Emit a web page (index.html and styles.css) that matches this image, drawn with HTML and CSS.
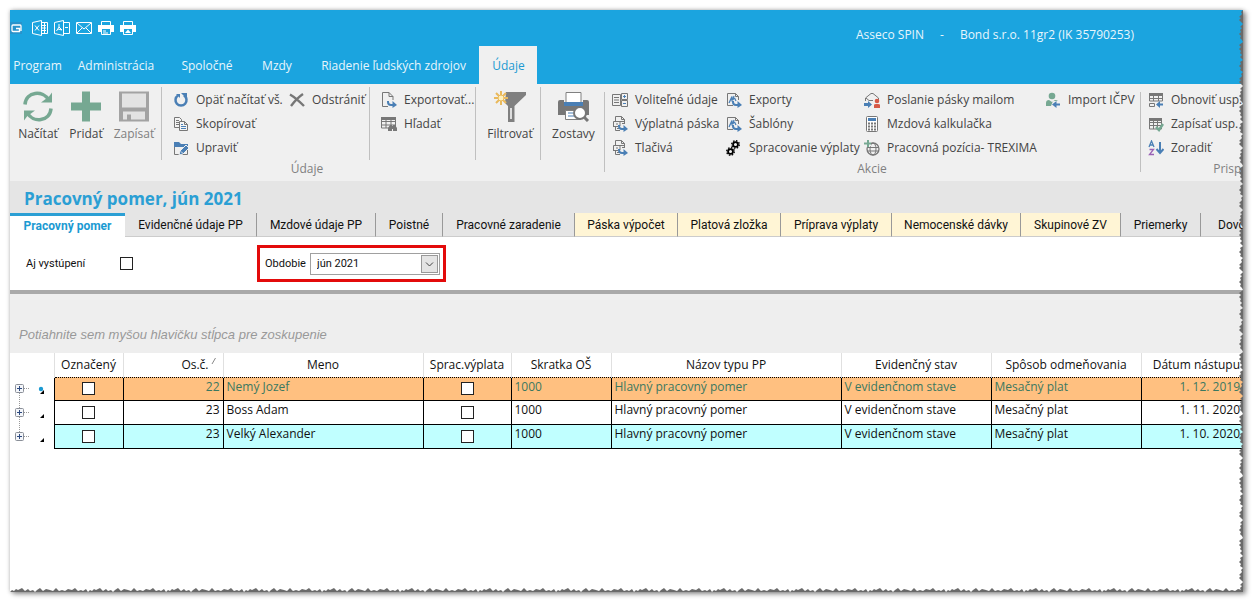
FILE: index.html
```html
<!DOCTYPE html>
<html lang="sk">
<head>
<meta charset="utf-8">
<title>Asseco SPIN</title>
<link rel="stylesheet" href="styles.css">
</head>
<body>
<svg class="defs" aria-hidden="true">
  <symbol id="export-arrow" viewBox="0 0 16 16"><path d="M7 9v1q0 3 3 3h3" fill="none" stroke="#4a7fb5" stroke-width="2"/><path d="M11.500 9l4.500 4-4.500 3z" fill="#4a7fb5"/></symbol>
  <symbol id="form" viewBox="0 0 16 16"><path d="M3.500 5V.5h6l3 3V8M9.500.5v3h3M3.500 11v3.500H8M1.500 11V5.500h11V8M1.500 10.500H6" fill="none" stroke="#777"/><path d="M4 8h2M8 6v4M10 7.500h2M5 12.500h3" stroke="#777"/><use href="#export-arrow"/></symbol>
  <symbol id="template" viewBox="0 0 16 16"><path d="M1.500 1.500h8l3 3V8M1.500 1.500v12H7M9.500 1.500v3h3" fill="none" stroke="#777"/><path d="M3 11L6 4.500v5M8 4l-1 4M8.500 6l1.500 3" fill="none" stroke="#4a7fb5" stroke-width="1.300"/><use href="#export-arrow"/></symbol>
  <symbol id="gear" viewBox="0 0 10 10"><circle cx="5" cy="5" r="2.700" fill="none" stroke="#000" stroke-width="2"/><circle cx="5" cy="5" r="4.200" fill="none" stroke="#000" stroke-width="1.500" stroke-dasharray="1.700 1.600"/></symbol>
  <symbol id="plus" viewBox="0 0 14 10"><rect x=".5" y=".5" width="8" height="8" rx="1" fill="#f4f6fa" stroke="#8a8f98"/><path d="M2 4.500h5M4.500 2v5" stroke="#2d4a80"/><path d="M9 4.500h5" stroke="#999" stroke-dasharray="1 1"/></symbol>
</svg>

<main class="window">
  <header class="titlebar">
    <div class="quick">
      <button aria-label="Aplikácia" class="app"><svg viewBox="0 0 12 16"><rect width="12" height="12" y="2" fill="#2893cb"/><path d="M6 8.500h3.500v3H3q-1 0-1-1V6q0-1 1-1h7q1 0 1 1v5" fill="none" stroke="#fff" stroke-width="1.300"/></svg></button>
      <button aria-label="Excel"><svg viewBox="0 0 16 16" fill="none" stroke="#fff"><path d="M.5 2.500L9.500.5v15l-9-2zM10 2.500h5.500v11H10M10 5.500h4M10 8h4M10 10.500h4M12.500 3v10M3 5.500l4 5M7 5.500l-4 5"/></svg></button>
      <button aria-label="PDF"><svg viewBox="0 0 16 16" fill="none" stroke="#fff"><path d="M.5 2.500L9.500.5v15l-9-2zM10 2.500h5.500v11H10M5 4v3l-2.500 4M5 7l3 3-4-1M11 7.500h3"/></svg></button>
      <button aria-label="E-mail"><svg viewBox="0 0 16 16" fill="none" stroke="#fff"><path d="M.5 2.500h15v11H.5zM1 3l7 6 7-6M1 13l5-5M15 13l-5-5"/></svg></button>
      <button aria-label="Tlač"><svg viewBox="0 0 16 16"><path d="M3.500 5V1.500h9V5" fill="none" stroke="#fff"/><path d="M0 5h16v7h-3V9H3v3H0z" fill="#fff"/><path d="M3.500 9v5.500h9V9M5 11h3M5 13h5" fill="none" stroke="#fff"/></svg></button>
      <button aria-label="Náhľad tlače"><svg viewBox="0 0 16 16"><path d="M3.500 5V1.500h9V5" fill="none" stroke="#fff"/><path d="M0 5h16v7h-3V9H3v3H0zM5 13h6L8 9.500z" fill="#fff"/><path d="M3.500 9v5.500h9V9" fill="none" stroke="#fff"/></svg></button>
    </div>
    <div class="caption"><span>Asseco SPIN</span><span>-</span><span>Bond s.r.o. 11gr2 (IK 35790253)</span></div>
  </header>
  <nav class="menu">
    <button>Program</button><button>Administrácia</button><button>Spoločné</button><button>Mzdy</button><button>Riadenie ľudských zdrojov</button><button class="active">Údaje</button>
  </nav>

  <section class="ribbon">
    <div class="group group-data">
      <div class="panels">
        <div class="panel bigs">
          <button class="big"><svg viewBox="0 0 30 30" fill="none" stroke="#76a892" stroke-width="3.500"><path d="M2 13C3 0 20-2 26 9M28 17C27 30 10 32 4 21"/><path d="M29 1v10H18l4-3 4-3zM1 29V19h11l-4 3-4 3z" fill="#76a892" stroke="none"/></svg><span>Načítať</span></button>
          <button class="big"><svg viewBox="0 0 30 30"><path d="M11 0h8v11h11v8H19v11h-8V19H0v-8h11z" fill="#76a892"/></svg><span>Pridať</span></button>
          <button class="big" disabled><svg viewBox="0 0 30 30"><path d="M0 0h30v30H0z" fill="#a3a3a3"/><path d="M3 2h24v14H3zM4 20h22v8H12v-5H8v5H4z" fill="#e3e3e3"/></svg><span>Zapísať</span></button>
        </div>
        <div class="panel tools tools-edit">
          <button><svg viewBox="0 0 16 16"><path d="M5 3.500a5.500 5.500 0 1 0 6 0" fill="none" stroke="#4a7fb5" stroke-width="2.500"/><path d="M8 1h6v6zM3 2h4v4z" fill="#4a7fb5"/></svg>Opäť načítať vš.</button>
          <button><svg viewBox="0 0 16 16" fill="none" stroke="#777" stroke-width="2.400"><path d="M1 2.500Q7 6 15 14M14 2Q8 6 2 14"/></svg>Odstrániť</button>
          <button><svg viewBox="0 0 16 16" fill="#f4f4f4" stroke="#777"><path d="M1.500 1.500h5l2 2v8h-7zM3 4.500h3M3 6.500h4M3 8.500h4"/><path d="M6.500 5.500h5l3 3v6h-8zM11.500 5.500v3h3"/><path d="M8 8.500h2M8 10.500h5M8 12.500h5" stroke="#4a7fb5"/></svg>Skopírovať</button>
          <span></span>
          <button><svg viewBox="0 0 16 16"><path d="M1.500 4v10.500h13V6" fill="none" stroke="#777"/><path d="M1 2h5l2 2h7v3H1z" fill="#4a7fb5"/><path d="M6 15l1-4 6-6 3 3-6 6z" fill="#4a7fb5" stroke="#f0f0f0"/><path d="M8 11.500l2 2" stroke="#eee"/></svg>Upraviť</button>
        </div>
        <div class="panel tools tools-export">
          <button><svg viewBox="0 0 16 16"><path d="M7 14.500H1.500V.5H8l4 4V8M8 .5v4h4" fill="none" stroke="#777"/><use href="#export-arrow"/></svg>Exportovať...</button>
          <button><svg viewBox="0 0 16 16"><path d="M.5 2h14v10H.5zM1 5.500h13M1 9h13M5 3v9M10 3v6" fill="none" stroke="#777"/><path d="M0 1h15v3H0zM7 12l2-3h2v1h1V9h2l2 3v3h-4v-2h-1v2H7z" fill="#777"/></svg>Hľadať</button>
        </div>
        <div class="panel single filter">
          <button class="big"><svg viewBox="0 0 32 31"><path d="M12 1h20v3L20.500 15v16H14V15l-3-3z" fill="#808080"/><path d="M17 17v11" stroke="#ddd" stroke-width="2"/><path d="M7 0v14M0 7h14M2 2l10 10M12 2L2 12" stroke="#e9b95c" stroke-width="2"/><circle cx="7" cy="7" r="3" fill="#fff0bc" stroke="#e9b95c"/></svg><span>Filtrovať</span></button>
        </div>
        <div class="panel single">
          <button class="big"><svg viewBox="0 0 32 31"><path d="M8 11V1.500h15V11" fill="#fff" stroke="#808080"/><path d="M0 11q0-2 2-2h4v6h19V9h4q2 0 2 2v13H0z" fill="#777"/><path d="M6 11h19v4H6z" fill="#4a7fb5"/><path d="M7.500 19.500h15v9h-15z" fill="#fff" stroke="#808080"/><path d="M10 22h5M10 25h6" stroke="#4a7fb5"/><circle cx="22" cy="22" r="6" fill="#fff" stroke="#777" stroke-width="2"/><path d="M26 26l4 4" stroke="#777" stroke-width="3"/></svg><span>Zostavy</span></button>
        </div>
      </div>
      <h2>Údaje</h2>
    </div>
    <div class="group group-actions">
      <div class="tools tools-actions">
        <button><svg viewBox="0 0 16 16" fill="none" stroke="#777"><path d="M.5 2.500h8v11h-8zM2 5.500h5M2 8h5M2 10.500h5M9.500 1.500h6v6h-6zM9.500 8.500h6v6h-6z"/><path d="M11 4.500h3M12.500 3v3M11 11.500h3" stroke="#4a7fb5"/></svg>Voliteľné údaje</button>
        <button><svg viewBox="0 0 16 16"><use href="#template"/></svg>Exporty</button>
        <button><svg viewBox="0 0 16 16"><path d="M1.500 9V6L7 1.500h2L14.500 6v2M2 6l3 2.500h4" fill="none" stroke="#777"/><path d="M0 11h4V9l4 3.500L4 16v-2H0zM5 11h2" fill="#4a7fb5"/><path d="M10 16v-3q0-1 2-1h2q2 0 2 1v3z" fill="#d65a48"/><circle cx="13" cy="9" r="2.300" fill="#d65a48"/></svg>Poslanie pásky mailom</button>
        <button><svg viewBox="0 0 16 16"><circle cx="7" cy="4" r="3.300" fill="#76a892"/><path d="M1 14v-3q0-3 3-3l3 2 3-2q2 0 3 1H8l-2 5z" fill="#76a892"/><path d="M15 12.500H9" stroke="#4a7fb5" stroke-width="2"/><path d="M11.500 9v7L7 12.500z" fill="#4a7fb5"/></svg>Import IČPV</button>
        <button><svg viewBox="0 0 16 16"><use href="#form"/></svg>Výplatná páska</button>
        <button><svg viewBox="0 0 16 16"><use href="#template"/></svg>Šablóny</button>
        <button><svg viewBox="0 0 16 16"><rect x="2.500" y=".5" width="11" height="15" rx="1" fill="#fff" stroke="#777"/><path d="M4 2h8v3H4z" fill="#4a7fb5"/><path d="M4 7.500h8M4 10.500h8M4 13.500h8" stroke="#777" stroke-width="2" stroke-dasharray="2 1"/></svg>Mzdová kalkulačka</button>
        <span></span>
        <button><svg viewBox="0 0 16 16"><use href="#form"/></svg>Tlačivá</button>
        <button><svg viewBox="0 0 16 16"><use href="#gear" x="5" width="9" height="9"/><use href="#gear" y="7" width="9" height="9"/></svg>Spracovanie výplaty</button>
        <button><svg viewBox="0 0 16 16"><circle cx="9" cy="9" r="6" fill="none" stroke="#777" stroke-width="1.300"/><ellipse cx="9" cy="9" rx="3" ry="6" fill="none" stroke="#777"/><path d="M3 7.500h12M3 11h12" stroke="#777"/><path d="M4 1v6M1 4h6" stroke="#f0f0f0" stroke-width="4"/><path d="M4 0v7M0 3.500h7" stroke="#76a892" stroke-width="2"/></svg>Pracovná pozícia- TREXIMA</button>
      </div>
      <h2>Akcie</h2>
    </div>
    <div class="group group-custom">
      <div class="tools">
        <button><svg viewBox="0 0 16 16"><path d="M1.500 2v7h13V2M1 6.500h13M5.500 3v6M10.500 3v6M1.500 11.500h5v3h-5z" fill="none" stroke="#777"/><path d="M1 1h14v3H1z" fill="#777"/><path d="M15 12.500h-4" stroke="#4a7fb5" stroke-width="2"/><path d="M12 9v7l-4-3.500z" fill="#4a7fb5"/></svg>Obnoviť usp.</button>
        <button><svg viewBox="0 0 16 16"><path d="M1.500 3v10h12V3M1 6.500h12M1 9.500h12M5.500 3v10M9.500 3v10" fill="none" stroke="#777"/><path d="M1 2h13v3H1z" fill="#777"/><path d="M8 11l3 3 4-6" fill="none" stroke="#76a892" stroke-width="2.500"/></svg>Zapísať usp.</button>
        <button><svg viewBox="0 0 16 16" fill="none"><path d="M1 7L3.500 1 6 7M2 5h3" stroke="#4a7fb5" stroke-width="1.300"/><path d="M1.500 9.500h4l-4 5h4.500" stroke="#9a62b5" stroke-width="1.300"/><path d="M12 2v10M8.500 9l3.500 4 3.500-4" stroke="#4a7fb5" stroke-width="2"/></svg>Zoradiť</button>
      </div>
      <h2>Prispôsobenie</h2>
    </div>
  </section>

  <h1>Pracovný pomer, jún 2021</h1>
  <div class="tabs" role="tablist">
    <button role="tab" class="current" aria-selected="true">Pracovný pomer</button>
    <button role="tab">Evidenčné údaje PP</button>
    <button role="tab">Mzdové údaje PP</button>
    <button role="tab">Poistné</button>
    <button role="tab">Pracovné zaradenie</button>
    <button role="tab" class="marked">Páska výpočet</button>
    <button role="tab" class="marked">Platová zložka</button>
    <button role="tab" class="marked">Príprava výplaty</button>
    <button role="tab" class="marked">Nemocenské dávky</button>
    <button role="tab" class="marked">Skupinové ZV</button>
    <button role="tab">Priemerky</button>
    <button role="tab">Dovolenky</button>
  </div>

  <form class="filters">
    <label for="left">Aj vystúpení</label>
    <input type="checkbox" id="left">
    <div class="period">
      <label for="period">Obdobie</label>
      <div class="combo">
        <select id="period"><option>jún 2021</option></select>
        <svg class="arrow" viewBox="0 0 17 18"><rect x=".5" y=".5" width="16" height="17" fill="#e4e4e4" stroke="#999"/><path d="M5 7.500l3.500 3.500L12 7.500" fill="none" stroke="#444"/></svg>
      </div>
    </div>
  </form>

  <p class="grouping">Potiahnite sem myšou hlavičku stĺpca pre zoskupenie</p>
  <table class="grid">
    <colgroup><col class="w-tree"><col class="w-mark"><col class="w-no"><col class="w-name"><col class="w-pay"><col class="w-no"><col class="w-type"><col class="w-state"><col class="w-state"><col></colgroup>
    <thead><tr><td></td><th>Označený</th><th class="num sorted">Os.č.<svg viewBox="0 0 6 8"><path d="M1 7l3.500-6" stroke="#888"/></svg></th><th>Meno</th><th>Sprac.výplata</th><th>Skratka OŠ</th><th>Názov typu PP</th><th>Evidenčný stav</th><th>Spôsob odmeňovania</th><th class="num">Dátum nástupu</th></tr></thead>
    <tbody>
      <tr class="selected"><td><svg class="tree" viewBox="0 0 44 23"><path d="M9.500 12v12" stroke="#999" stroke-dasharray="1 1"/><use href="#plus" x="5" y="7" width="14" height="10"/><circle cx="31" cy="12" r="2.200" fill="#1b9ad2"/><path d="M30 17h4v-4z"/></svg></td><td><input type="checkbox" aria-label="Označený 1"></td><td class="num">22</td><td>Nemý Jozef</td><td><input type="checkbox" aria-label="Sprac.výplata 1"></td><td>1000</td><td>Hlavný pracovný pomer</td><td>V evidenčnom stave</td><td>Mesačný plat</td><td class="num">1. 12. 2019</td></tr>
      <tr><td><svg class="tree" viewBox="0 0 44 23"><path d="M9.500 0v24" stroke="#999" stroke-dasharray="1 1"/><use href="#plus" x="5" y="7" width="14" height="10"/><path d="M30 17h4v-4z"/></svg></td><td><input type="checkbox" aria-label="Označený 2"></td><td class="num">23</td><td>Boss Adam</td><td><input type="checkbox" aria-label="Sprac.výplata 2"></td><td>1000</td><td>Hlavný pracovný pomer</td><td>V evidenčnom stave</td><td>Mesačný plat</td><td class="num">1. 11. 2020</td></tr>
      <tr class="alternate"><td><svg class="tree" viewBox="0 0 44 23"><path d="M9.500 0v10" stroke="#999" stroke-dasharray="1 1"/><use href="#plus" x="5" y="7" width="14" height="10"/><path d="M30 17h4v-4z"/></svg></td><td><input type="checkbox" aria-label="Označený 3"></td><td class="num">23</td><td>Velký Alexander</td><td><input type="checkbox" aria-label="Sprac.výplata 3"></td><td>1000</td><td>Hlavný pracovný pomer</td><td>V evidenčnom stave</td><td>Mesačný plat</td><td class="num">1. 10. 2020</td></tr>
    </tbody>
  </table>

  <svg class="tear tear-right" aria-hidden="true"><defs><pattern id="tear-v" width="5" height="62" patternUnits="userSpaceOnUse"><path d="M5 0L3 2 4 4 1 7 3 8 1 10 3 12 5 14 2 17 4 18 2 20 3 22 1 24 3 26 2 28 4 30 5 32 1 35 3 37 1 39 3 41 2 43 4 45 2 47 5 50 2 52 3 54 1 56 3 58 2 60 5 62z" fill="#6a6a6a"/></pattern></defs><rect width="100%" height="100%" fill="url(#tear-v)"/></svg>
  <svg class="tear tear-bottom" aria-hidden="true"><defs><pattern id="tear-h" width="78" height="5" patternUnits="userSpaceOnUse"><path d="M0 5L2 3 4 4 6 2 8 3 12 1 15 4 18 2 20 4 23 3 25 5 27 3 30 1 33 4 36 2 40 3 43 4 46 1 49 4 52 3 55 4 58 2 62 3 65 1 68 4 71 3 73 4 76 2 78 5z" fill="#6a6a6a"/></pattern></defs><rect width="100%" height="100%" fill="url(#tear-h)"/></svg>
</main>
</body>
</html>
```
FILE: styles.css
```css
* { box-sizing: border-box; }

body {
  margin: 0;
  min-height: 100vh;
  display: flex;
  padding: 10px 17px 18px 10px;
  background: #fff;
  color: #222;
  font: 12px/16px "Open Sans", "Noto Sans", sans-serif;
}

button {
  padding: 0;
  border: 0;
  background: none;
  color: inherit;
  font: inherit;
  white-space: nowrap;
}

h1, h2, p { margin: 0; }
.defs { position: absolute; width: 0; height: 0; }

.window {
  position: relative;
  flex: 1;
  min-width: 0;
  background: #fff;
  box-shadow: 0 0 4px rgba(0, 0, 0, .25), 3px 2px 5px rgba(0, 0, 0, .4);
}

/* title bar and menu */
.titlebar {
  display: flex;
  justify-content: space-between;
  height: 36px;
  padding-right: 109px;
  background: #1ba4df;
  color: #e8f6fc;
}
.quick { display: flex; align-items: center; gap: 6px; }
.quick svg { display: block; width: 16px; height: 16px; }
.quick .app { margin-right: 4px; }
.quick .app svg { width: 12px; }
.caption { display: flex; gap: 16px; padding-top: 17px; white-space: nowrap; }

.menu {
  display: grid;
  grid-template-columns: 54px 103px 79px 61px 172px 58px;
  height: 38px;
  background: #1ba4df;
  color: #e8f6fc;
}
.menu button { padding: 2px 0 0 1px; }
.menu .active { background: #f0f0f0; color: #1b9ad2; }

/* ribbon */
.ribbon {
  display: flex;
  height: 97px;
  overflow: hidden;
  background: #f0f0f0;
  color: #444;
}
.group {
  position: relative;
  display: flex;
  flex: none;
  flex-direction: column;
  justify-content: space-between;
  padding: 3px 0 4px;
}
.group h2 { color: #808080; font-size: 12px; font-weight: 400; text-align: center; }
.group + .group::before {
  content: "";
  position: absolute;
  left: 0;
  top: 8px;
  bottom: 9px;
  width: 1px;
  background: #c0c0c0;
}
.group-data { width: 594px; }
.group-actions { width: 536px; }
.group-custom { width: 226px; }
.panels { display: flex; }
.panel { flex: none; height: 73px; border-right: 1px solid #c0c0c0; }
.panel:last-child { border: 0; }
.bigs { display: flex; width: 152px; padding-left: 4px; }
.big {
  display: flex;
  flex-direction: column;
  align-items: center;
  gap: 4px;
  width: 48px;
  height: 56px;
  padding-top: 4px;
}
.big svg { flex: none; width: 30px; height: 31px; }
.big:disabled { color: #808080; }
.single { display: flex; justify-content: center; width: 65px; }
.filter { padding-left: 4px; }
.single .big svg { width: 32px; }

.tools {
  display: grid;
  grid-auto-rows: 24px;
  align-content: start;
  padding-left: 8px;
}
.tools button { display: flex; align-items: center; gap: 7px; padding-top: 1px; }
.tools svg { flex: none; width: 16px; height: 16px; }
.tools-edit { width: 208px; padding-left: 11px; grid-template-columns: 116px auto; }
.tools-export { width: 106px; padding-left: 11px; }
.tools-actions { grid-template-columns: 114px 138px 181px auto; }

/* page heading and tabs */
h1 {
  padding: 6px 14px 2px;
  background: #e5e5e5;
  color: #2b9fd4;
  font-size: 17px;
  line-height: 24px;
}
.tabs {
  display: grid;
  grid-template-columns: 115px 132px 119px 67px 132px 103px 103px 111px 129px 100px 80px 90px;
  height: 24px;
  overflow: hidden;
  background: #e5e5e5;
  color: #111;
  font-family: Roboto, sans-serif;
}
.tabs button { border-right: 1px solid #999; border-bottom: 1px solid #ccc; }
.tabs .marked { background: #fff5d5; }
.tabs .current {
  padding-bottom: 2px;
  border-top: 3px solid #2b9fd4;
  border-right: 0;
  border-bottom: 0;
  background: #fff;
  color: #1b9ad2;
  font-weight: 700;
}

/* filter form */
.filters {
  display: flex;
  align-items: center;
  height: 57px;
  padding: 0 16px;
  border-bottom: 4px solid #a9a9a9;
  color: #111;
  font: 11px/16px Roboto, sans-serif;
}
.filters > label { width: 94px; }
input[type="checkbox"] {
  display: block;
  appearance: none;
  width: 13px;
  height: 13px;
  margin: 0;
  border: 1px solid #222;
  background: #fff;
}
.period {
  display: flex;
  align-items: center;
  justify-content: space-between;
  width: 189px;
  height: 37px;
  margin-left: 124px;
  padding: 0 3px 0 5px;
  border: 3px solid #e30b0b;
}
.combo { position: relative; width: 130px; }
.combo select {
  display: block;
  appearance: none;
  width: 100%;
  height: 22px;
  padding: 0 6px;
  border: 1px solid #a0a0a0;
  border-radius: 0;
  background: #fff;
  color: #111;
  font: inherit;
}
.arrow { position: absolute; top: 2px; right: 2px; width: 17px; height: 18px; pointer-events: none; }

/* data grid */
.grouping {
  padding: 33px 9px 10px;
  background: #eee;
  color: #999;
  font: italic 13px/16px "Liberation Sans", Arial, sans-serif;
}
.grid {
  width: 100%;
  table-layout: fixed;
  border-collapse: collapse;
  color: #111;
  white-space: nowrap;
}
.w-tree { width: 44px; }
.w-mark { width: 69px; }
.w-no { width: 100px; }
.w-name { width: 200px; }
.w-pay { width: 88px; }
.w-type { width: 230px; }
.w-state { width: 150px; }
.grid th, .grid td { height: 24px; padding: 0 3px; }
.grid th { border-left: 1px solid #e0e0e0; border-bottom: 1px dotted #000; font-weight: 400; }
.grid tbody td { padding-bottom: 4px; border: 1px solid #000; border-top-width: 0; line-height: 16px; }
.grid tbody td:first-child { padding: 0; border: 0; }
.grid tbody td:last-child { border-right: 0; }
.grid tbody .selected td { height: 23px; }
.grid .num { text-align: right; }
.sorted svg { width: 6px; height: 8px; margin: 0 3px 4px 2px; }
.grid input { margin: 4px auto 0; }
.tree { display: block; width: 44px; height: 23px; }
.selected td { background: #ffc080; color: #3b7860; }
.alternate td { background: #c0ffff; }
.grid tbody td:first-child { background: #fff; }

/* torn paper edge */
.tear { position: absolute; }
.tear-right { top: 0; right: 0; width: 5px; height: 100%; }
.tear-bottom { bottom: 0; left: 0; width: 100%; height: 5px; }
```
